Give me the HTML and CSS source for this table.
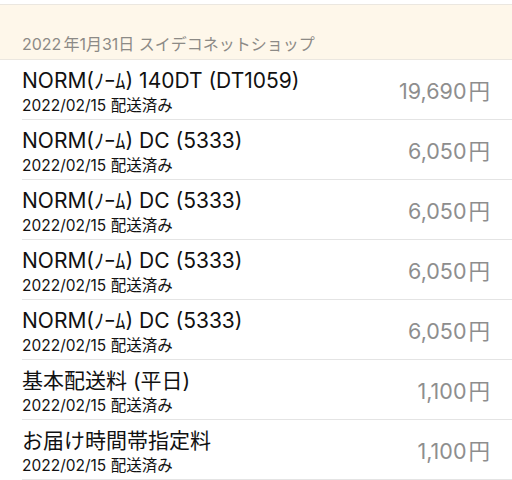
FILE: index.html
```html
<!DOCTYPE html>
<html lang="ja">
<head>
<meta charset="utf-8">
<link rel="stylesheet" href="styles.css">
</head>
<body>
<div class="top"></div>
<div class="header"><span class="header-text">2022<span class="gap">年</span>1月31日 スイデコネットショップ</span></div>
<ul class="list">
  <li class="row"><div class="info"><div class="name">NORM(ﾉｰﾑ) 140DT (DT1059)</div><div class="sub">2022/02/15 配送済み</div></div><div class="price">19,690<span class="yen">円</span></div></li>
  <li class="row"><div class="info"><div class="name">NORM(ﾉｰﾑ) DC (5333)</div><div class="sub">2022/02/15 配送済み</div></div><div class="price">6,050<span class="yen">円</span></div></li>
  <li class="row"><div class="info"><div class="name">NORM(ﾉｰﾑ) DC (5333)</div><div class="sub">2022/02/15 配送済み</div></div><div class="price">6,050<span class="yen">円</span></div></li>
  <li class="row"><div class="info"><div class="name">NORM(ﾉｰﾑ) DC (5333)</div><div class="sub">2022/02/15 配送済み</div></div><div class="price">6,050<span class="yen">円</span></div></li>
  <li class="row"><div class="info"><div class="name">NORM(ﾉｰﾑ) DC (5333)</div><div class="sub">2022/02/15 配送済み</div></div><div class="price">6,050<span class="yen">円</span></div></li>
  <li class="row"><div class="info"><div class="name">基本配送料 (平日)</div><div class="sub">2022/02/15 配送済み</div></div><div class="price">1,100<span class="yen">円</span></div></li>
  <li class="row"><div class="info"><div class="name">お届け時間帯指定料</div><div class="sub">2022/02/15 配送済み</div></div><div class="price">1,100<span class="yen">円</span></div></li>
</ul>
</body>
</html>
```

FILE: styles.css
```css
html, body {
  margin: 0;
  padding: 0;
  background: #ffffff;
  font-family: "Inter", "Noto Sans CJK JP", sans-serif;
  width: 512px;
  height: 480px;
  overflow: hidden;
}
.top {
  height: 4px;
  background: #ffffff;
  border-bottom: 1px solid #ebe7e0;
}
.header {
  height: 55px;
  background: #fef7ea;
  border-bottom: 1px solid #ebe7e0;
  box-sizing: border-box;
  padding: 29px 0 0 22px;
}
.header-text {
  font-size: 16px;
  line-height: 20px;
  color: #8c8a86;
}
.gap {
  margin-left: 2px;
}
.list {
  list-style: none;
  margin: 0;
  padding: 0 0 0 22px;
}
.row {
  height: 60px;
  box-sizing: border-box;
  border-bottom: 1px solid #e4e4e4;
  display: flex;
  align-items: center;
  justify-content: space-between;
  padding: 4px 22px 0 0;
}
.name {
  font-size: 21px;
  line-height: 28px;
  color: #111111;
}
.sub {
  font-size: 15.5px;
  line-height: 21px;
  color: #111111;
}
.price {
  font-size: 21.5px;
  color: #8e8e8e;
  margin-top: -4px;
}
.yen {
  margin-left: 2px;
}
```
